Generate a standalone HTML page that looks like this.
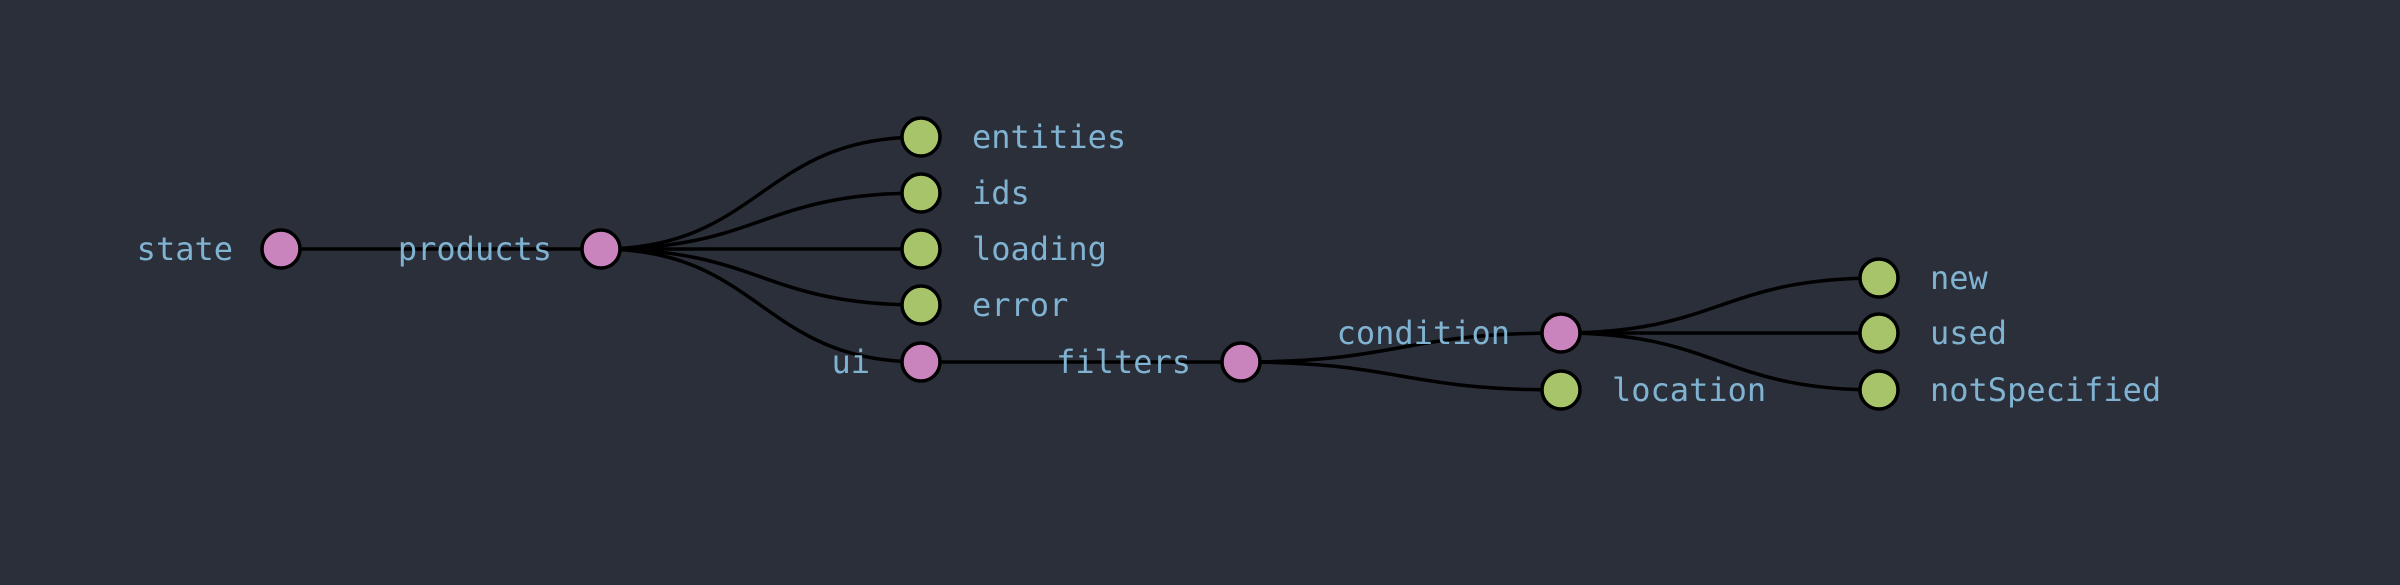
<!DOCTYPE html>
<html><head><meta charset="utf-8"><style>
html,body{margin:0;padding:0;background:#2b2f3a;width:2400px;height:585px;overflow:hidden}
svg text{font-family:"DejaVu Sans Mono","Liberation Mono",monospace;font-size:32px;fill:#80b3d2}
</style></head><body>
<svg width="2400" height="585" viewBox="0 0 2400 585">
<g fill="none" stroke="#000" stroke-width="3.5">
<path d="M281,249 L601,249"/>
<path d="M601,249 C761,249 761,137 921,137"/>
<path d="M601,249 C761,249 761,193 921,193"/>
<path d="M601,249 L921,249"/>
<path d="M601,249 C761,249 761,305 921,305"/>
<path d="M601,249 C761,249 761,362 921,362"/>
<path d="M921,362 L1241,362"/>
<path d="M1241,362 C1401,362 1401,333 1561,333"/>
<path d="M1241,362 C1401,362 1401,390 1561,390"/>
<path d="M1561,333 C1720,333 1720,278 1879,278"/>
<path d="M1561,333 L1879,333"/>
<path d="M1561,333 C1720,333 1720,390 1879,390"/>
</g>
<g stroke="#000" stroke-width="3.5">
<circle cx="281" cy="249" r="19" fill="#c984bd"/>
<circle cx="601" cy="249" r="19" fill="#c984bd"/>
<circle cx="921" cy="137" r="19" fill="#a8c46a"/>
<circle cx="921" cy="193" r="19" fill="#a8c46a"/>
<circle cx="921" cy="249" r="19" fill="#a8c46a"/>
<circle cx="921" cy="305" r="19" fill="#a8c46a"/>
<circle cx="921" cy="362" r="19" fill="#c984bd"/>
<circle cx="1241" cy="362" r="19" fill="#c984bd"/>
<circle cx="1561" cy="333" r="19" fill="#c984bd"/>
<circle cx="1561" cy="390" r="19" fill="#a8c46a"/>
<circle cx="1879" cy="278" r="19" fill="#a8c46a"/>
<circle cx="1879" cy="333" r="19" fill="#a8c46a"/>
<circle cx="1879" cy="390" r="19" fill="#a8c46a"/>
</g>
<text x="233" y="260" text-anchor="end">state</text>
<text x="552" y="260" text-anchor="end">products</text>
<text x="870" y="373" text-anchor="end">ui</text>
<text x="1191" y="373" text-anchor="end">filters</text>
<text x="1510" y="344" text-anchor="end">condition</text>
<text x="972" y="148">entities</text>
<text x="972" y="204">ids</text>
<text x="972" y="260">loading</text>
<text x="972" y="316">error</text>
<text x="1612" y="401">location</text>
<text x="1930" y="289">new</text>
<text x="1930" y="344">used</text>
<text x="1930" y="401">notSpecified</text>
</svg>
</body></html>
